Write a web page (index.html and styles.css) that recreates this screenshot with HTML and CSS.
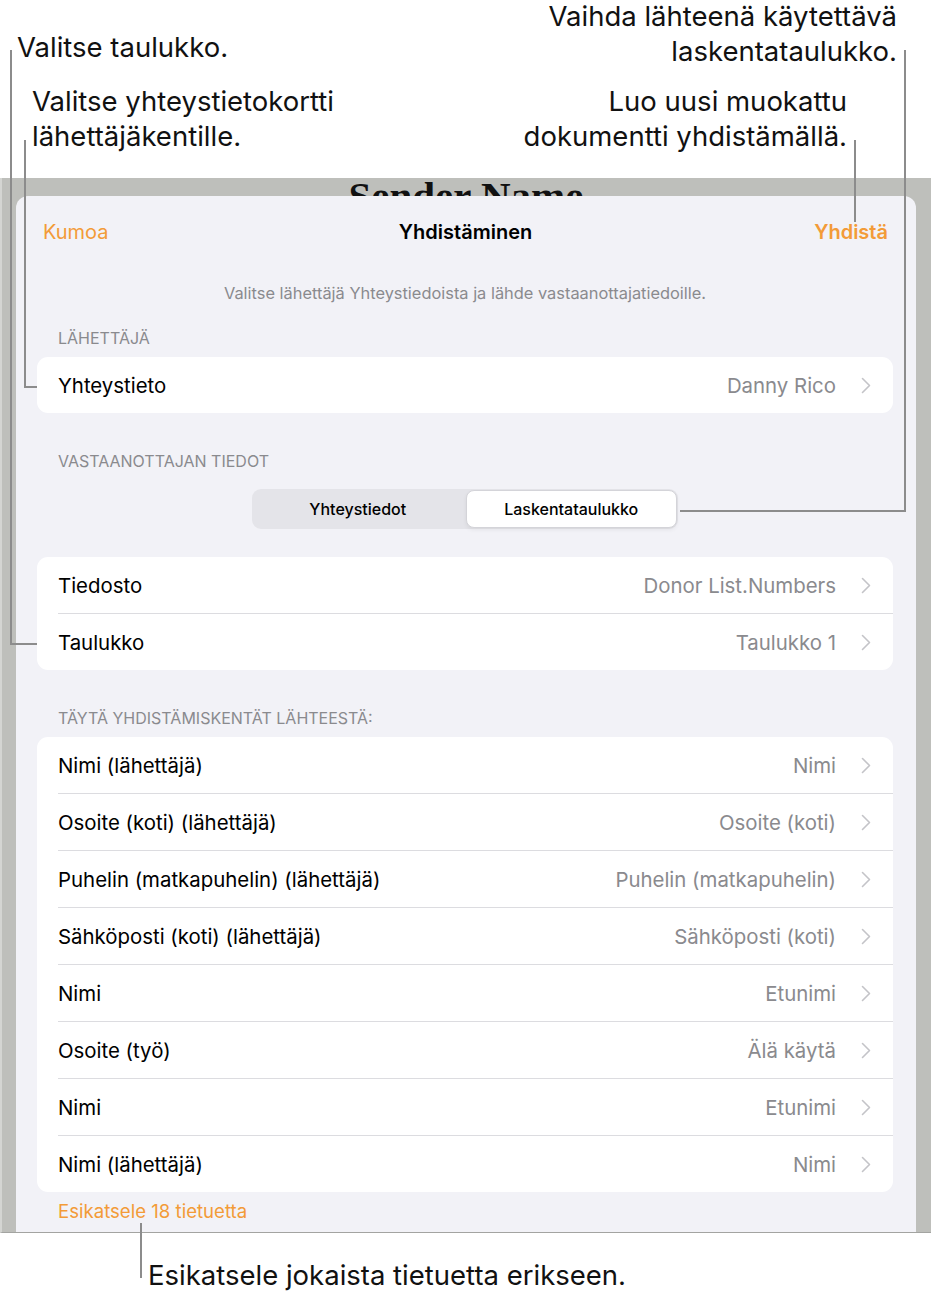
FILE: index.html
```html
<!DOCTYPE html>
<html lang="fi">
<head>
    <meta charset="UTF-8">
    <meta name="viewport" content="width=device-width, initial-scale=1.0">
    <title>Yhdistäminen</title>
    <link rel="stylesheet" href="styles.css">
</head>
<body>

    <div class="figure">
        <!-- callouts -->
        <p class="callout c-table">Valitse taulukko.</p>
        <p class="callout c-contact">Valitse yhteystietokortti<br>lähettäjäkentille.</p>
        <p class="callout c-source">Vaihda lähteenä käytettävä<br>laskentataulukko.</p>
        <p class="callout c-merge">Luo uusi muokattu<br>dokumentti yhdistämällä.</p>
        <p class="callout c-preview">Esikatsele jokaista tietuetta erikseen.</p>

        <span class="leader l-table"></span>
        <span class="leader l-contact"></span>
        <span class="leader l-merge"></span>
        <span class="leader l-source"></span>
        <span class="leader l-preview"></span>

        <div class="screen">
            <div class="doc-peek"><span>Sender Name</span></div>

            <div class="sheet">
                <div class="nav">
                    <span class="nav-btn">Kumoa</span>
                    <span class="nav-title">Yhdistäminen</span>
                    <span class="nav-btn nav-done">Yhdistä</span>
                </div>

                <p class="hint">Valitse lähettäjä Yhteystiedoista ja lähde vastaanottajatiedoille.</p>

                <h3 class="section-title first">LÄHETTÄJÄ</h3>
                <div class="card">
                    <div class="row">
                        <span class="label">Yhteystieto</span>
                        <span class="value">Danny Rico</span>
                        <svg class="chevron" width="10" height="17" viewBox="0 0 10 17"><path d="M1.5 1.5 L8.5 8.5 L1.5 15.5" /></svg>
                    </div>
                </div>

                <h3 class="section-title">VASTAANOTTAJAN TIEDOT</h3>
                <div class="segmented">
                    <span class="segment">Yhteystiedot</span>
                    <span class="segment active">Laskentataulukko</span>
                </div>

                <div class="card source-card">
                    <div class="row">
                        <span class="label">Tiedosto</span>
                        <span class="value">Donor List.Numbers</span>
                        <svg class="chevron" width="10" height="17" viewBox="0 0 10 17"><path d="M1.5 1.5 L8.5 8.5 L1.5 15.5" /></svg>
                    </div>
                    <div class="row">
                        <span class="label">Taulukko</span>
                        <span class="value">Taulukko 1</span>
                        <svg class="chevron" width="10" height="17" viewBox="0 0 10 17"><path d="M1.5 1.5 L8.5 8.5 L1.5 15.5" /></svg>
                    </div>
                </div>

                <h3 class="section-title">TÄYTÄ YHDISTÄMISKENTÄT LÄHTEESTÄ:</h3>
                <div class="card" id="fields"></div>

                <p class="preview-link">Esikatsele 18 tietuetta</p>
            </div>
        </div>
    </div>

    <script>
        const fields = [
            ["Nimi (lähettäjä)", "Nimi"],
            ["Osoite (koti) (lähettäjä)", "Osoite (koti)"],
            ["Puhelin (matkapuhelin) (lähettäjä)", "Puhelin (matkapuhelin)"],
            ["Sähköposti (koti) (lähettäjä)", "Sähköposti (koti)"],
            ["Nimi", "Etunimi"],
            ["Osoite (työ)", "Älä käytä"],
            ["Nimi", "Etunimi"],
            ["Nimi (lähettäjä)", "Nimi"]
        ];

        const fieldList = document.getElementById('fields');

        fields.forEach(([label, value]) => {
            const row = document.createElement('div');
            row.className = 'row';
            row.innerHTML = `
                <span class="label">${label}</span>
                <span class="value">${value}</span>
                <svg class="chevron" width="10" height="17" viewBox="0 0 10 17"><path d="M1.5 1.5 L8.5 8.5 L1.5 15.5" /></svg>`;
            fieldList.appendChild(row);
        });
    </script>
</body>
</html>
```

FILE: styles.css
```css
* {
    margin: 0;
    padding: 0;
    box-sizing: border-box;
}

body {
    background: #fff;
    font-family: Inter, "Noto Sans", sans-serif;
    color: #000;
}

.figure {
    position: relative;
    width: 931px;
    height: 1303px;
    padding-top: 178px;
}

/* callout labels and leader lines */

.callout {
    position: absolute;
    font-size: 27.5px;
    line-height: 35px;
    color: #111;
    white-space: nowrap;
}

.c-table {
    left: 17px;
    top: 30px;
}

.c-contact {
    left: 32px;
    top: 84px;
}

.c-source {
    right: 34px;
    top: -1px;
    text-align: right;
}

.c-merge {
    right: 84px;
    top: 84px;
    text-align: right;
}

.c-preview {
    left: 148px;
    top: 1258px;
}

.leader {
    position: absolute;
    border: 0 solid #8c8c8c;
}

.l-table {
    left: 10px;
    top: 50px;
    width: 27px;
    height: 595px;
    border-left-width: 2px;
    border-bottom-width: 2px;
}

.l-contact {
    left: 24px;
    top: 140px;
    width: 13px;
    height: 248px;
    border-left-width: 2px;
    border-bottom-width: 2px;
}

.l-merge {
    left: 854px;
    top: 140px;
    height: 82px;
    border-left-width: 2px;
}

.l-source {
    left: 680px;
    top: 50px;
    width: 226px;
    height: 462px;
    border-right-width: 2px;
    border-bottom-width: 2px;
}

.l-preview {
    left: 140px;
    top: 1223px;
    height: 55px;
    border-left-width: 2px;
}

/* device screen */

.screen {
    background: #bebfbb;
    height: 1055px;
    border-bottom: 1px solid #a3a4a1;
    border-left: 2px solid #d4d5d2;
    padding: 0 15px 0 14px;
}

.doc-peek {
    height: 18px;
    overflow: hidden;
    text-align: center;
    font-family: "Liberation Serif", serif;
    font-weight: bold;
    font-size: 41px;
    line-height: 41px;
    color: #111;
}

.doc-peek span {
    display: block;
    margin-top: -2px;
}

.sheet {
    background: #f2f2f7;
    border-radius: 12px 12px 0 0;
    height: 1036px;
    padding: 0 23px 0 21px;
}

.nav {
    height: 72px;
    display: grid;
    grid-template-columns: 1fr auto 1fr;
    align-items: center;
    padding: 0 5px 0 6px;
    font-size: 20px;
}

.nav-btn {
    color: #f39b38;
}

.nav-title {
    font-weight: 600;
}

.nav-done {
    font-weight: 600;
    text-align: right;
}

.hint {
    margin-top: 15px;
    text-align: center;
    font-size: 16.4px;
    line-height: 20px;
    color: #8a8a8e;
}

.section-title {
    margin-top: 38px;
    margin-bottom: 9px;
    padding-left: 21px;
    font-size: 16px;
    font-weight: normal;
    line-height: 20px;
    color: #8a8a8e;
}

.section-title.first {
    margin-top: 25px;
}

.card {
    background: #fff;
    border-radius: 11px;
    padding-left: 21px;
}

.row {
    height: 56px;
    box-sizing: content-box;
    display: flex;
    align-items: center;
    padding-right: 22px;
    font-size: 20.4px;
}

.row + .row {
    border-top: 1px solid #dcdce0;
}

.label {
    flex: 1;
}

.value {
    color: #8a8a8e;
}

.chevron {
    margin-left: 25px;
    fill: none;
    stroke: #c4c4c8;
    stroke-width: 1.6;
    stroke-linecap: round;
    stroke-linejoin: round;
}

.segmented {
    width: 426px;
    height: 40px;
    margin: 18px auto 28px;
    padding: 1px;
    display: flex;
    background: #e4e4e9;
    border-radius: 9px;
}

.segment {
    flex: 1;
    display: flex;
    align-items: center;
    justify-content: center;
    font-size: 16px;
    font-weight: 500;
    border-radius: 8px;
}

.segment.active {
    margin-left: 3px;
    background: #fff;
    border: 1px solid #d4d4d9;
    box-shadow: 0 2px 4px rgba(0, 0, 0, 0.06);
}

.preview-link {
    margin-top: 9px;
    padding-left: 21px;
    font-size: 18.6px;
    line-height: 20px;
    color: #f39b38;
}
```
